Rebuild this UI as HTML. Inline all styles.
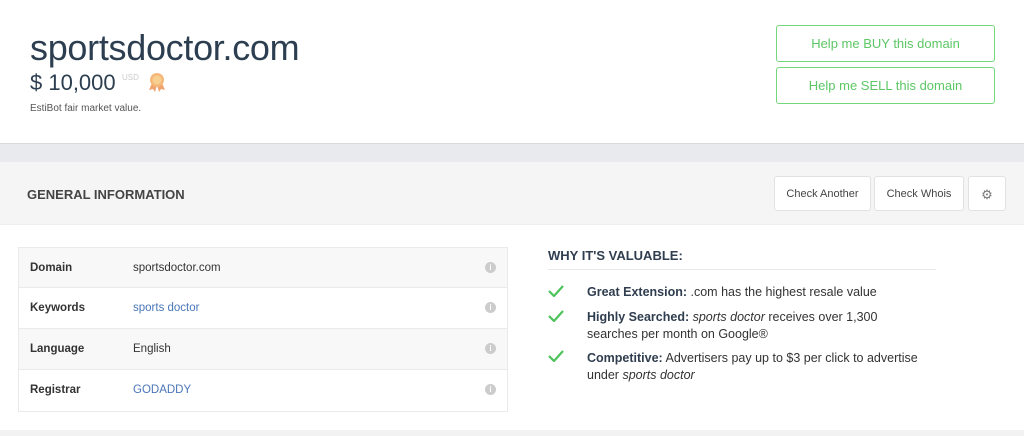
<!DOCTYPE html>
<html><head><style>
*{box-sizing:border-box;margin:0;padding:0}
body{width:1024px;height:436px;overflow:hidden;background:#fff;font-family:"Liberation Sans",sans-serif;position:relative;color:#333}
.abs{position:absolute}
.btn{position:absolute;left:776px;width:219px;height:37px;border:1.5px solid #72d87a;border-radius:3px;color:#5cc765;font-size:13px;text-align:center;line-height:35px}
.wb{position:absolute;top:176px;height:35px;background:#fff;border:1px solid #e2e2e2;border-radius:3px;font-size:11px;color:#444;text-align:center;line-height:35px}
.row{position:absolute;left:18px;width:490px;height:41px;border:1px solid #eaeaea;font-size:11.5px}
.row b{position:absolute;left:11px;top:14px;color:#333}
.row span{position:absolute;left:114px;top:14px}
.row i{position:absolute;right:11px;top:14px;width:11px;height:11px;border-radius:50%;background:#ccc;color:#fff;font-size:8px;font-style:normal;text-align:center;line-height:11px;font-weight:bold}
.li{position:absolute;left:587px;font-size:12.5px;line-height:17px;color:#333;width:360px}
.li b{color:#2f3d4f}
.ck{position:absolute;left:548px}
</style></head><body>
<div class="abs" style="left:30px;top:27px;font-size:36px;color:#2c3e50;letter-spacing:-0.3px">sportsdoctor.com</div>
<div class="abs" style="left:30px;top:70px;font-size:22px;color:#2c3e50">$ 10,000</div>
<div class="abs" style="left:122px;top:73px;font-size:8px;color:#ccc">USD</div>
<svg class="abs" style="left:146px;top:71px" width="22" height="22" viewBox="0 0 22 22"><path d="M6 12 L3 19 L7 18 L9 21 L11 14Z M16 12 L19 19 L15 18 L13 21 L11 14Z" fill="#f0a36e"/><circle cx="11" cy="9" r="7" fill="#f5b87a"/><circle cx="11" cy="9" r="4.5" fill="#f7cf8e"/></svg>
<div class="abs" style="left:30px;top:103px;font-size:10px;color:#555">EstiBot fair market value.</div>
<div class="btn" style="top:25px">Help me BUY this domain</div>
<div class="btn" style="top:67px">Help me SELL this domain</div>
<div class="abs" style="left:0;top:143px;width:1024px;height:19px;background:#e9eaed;border-top:1px solid #d8d9dc"></div>
<div class="abs" style="left:0;top:162px;width:1024px;height:63px;background:#f5f5f5;border-bottom:1px solid #eee"></div>
<div class="abs" style="left:27px;top:187px;font-size:13px;font-weight:bold;color:#444">GENERAL INFORMATION</div>
<div class="wb" style="left:774px;width:97px">Check Another</div>
<div class="wb" style="left:874px;width:90px">Check Whois</div>
<div class="wb" style="left:968px;width:38px;color:#777;font-size:13px">&#9881;</div>
<div class="row" style="top:247px;background:#f8f8f8"><b>Domain</b><span>sportsdoctor.com</span><i>i</i></div>
<div class="row" style="top:288px;border-top:none"><b>Keywords</b><span style="color:#4a76b8">sports doctor</span><i>i</i></div>
<div class="row" style="top:329px;border-top:none;background:#f8f8f8"><b>Language</b><span>English</span><i>i</i></div>
<div class="row" style="top:370px;border-top:none;height:42px"><b>Registrar</b><span style="color:#4a76b8">GODADDY</span><i>i</i></div>
<div class="abs" style="left:548px;top:248px;font-size:13px;font-weight:bold;color:#2f3d4f">WHY IT'S VALUABLE:</div>
<div class="abs" style="left:548px;top:269px;width:388px;height:1px;background:#e8e8e8"></div>
<svg class="ck" style="top:285px" width="16" height="12"><path d="M1 6 L6 11 L15 1" stroke="#4cc35a" stroke-width="2.2" fill="none"/></svg>
<svg class="ck" style="top:310px" width="16" height="12"><path d="M1 6 L6 11 L15 1" stroke="#4cc35a" stroke-width="2.2" fill="none"/></svg>
<svg class="ck" style="top:350px" width="16" height="12"><path d="M1 6 L6 11 L15 1" stroke="#4cc35a" stroke-width="2.2" fill="none"/></svg>
<div class="li" style="top:284px"><b>Great Extension:</b> .com has the highest resale value</div>
<div class="li" style="top:309px"><b>Highly Searched:</b> <em>sports doctor</em> receives over 1,300<br>searches per month on Google®</div>
<div class="li" style="top:350px"><b>Competitive:</b> Advertisers pay up to $3 per click to advertise<br>under <em>sports doctor</em></div>
<div class="abs" style="left:0;top:430px;width:1024px;height:6px;background:#f2f2f2"></div>
</body></html>
